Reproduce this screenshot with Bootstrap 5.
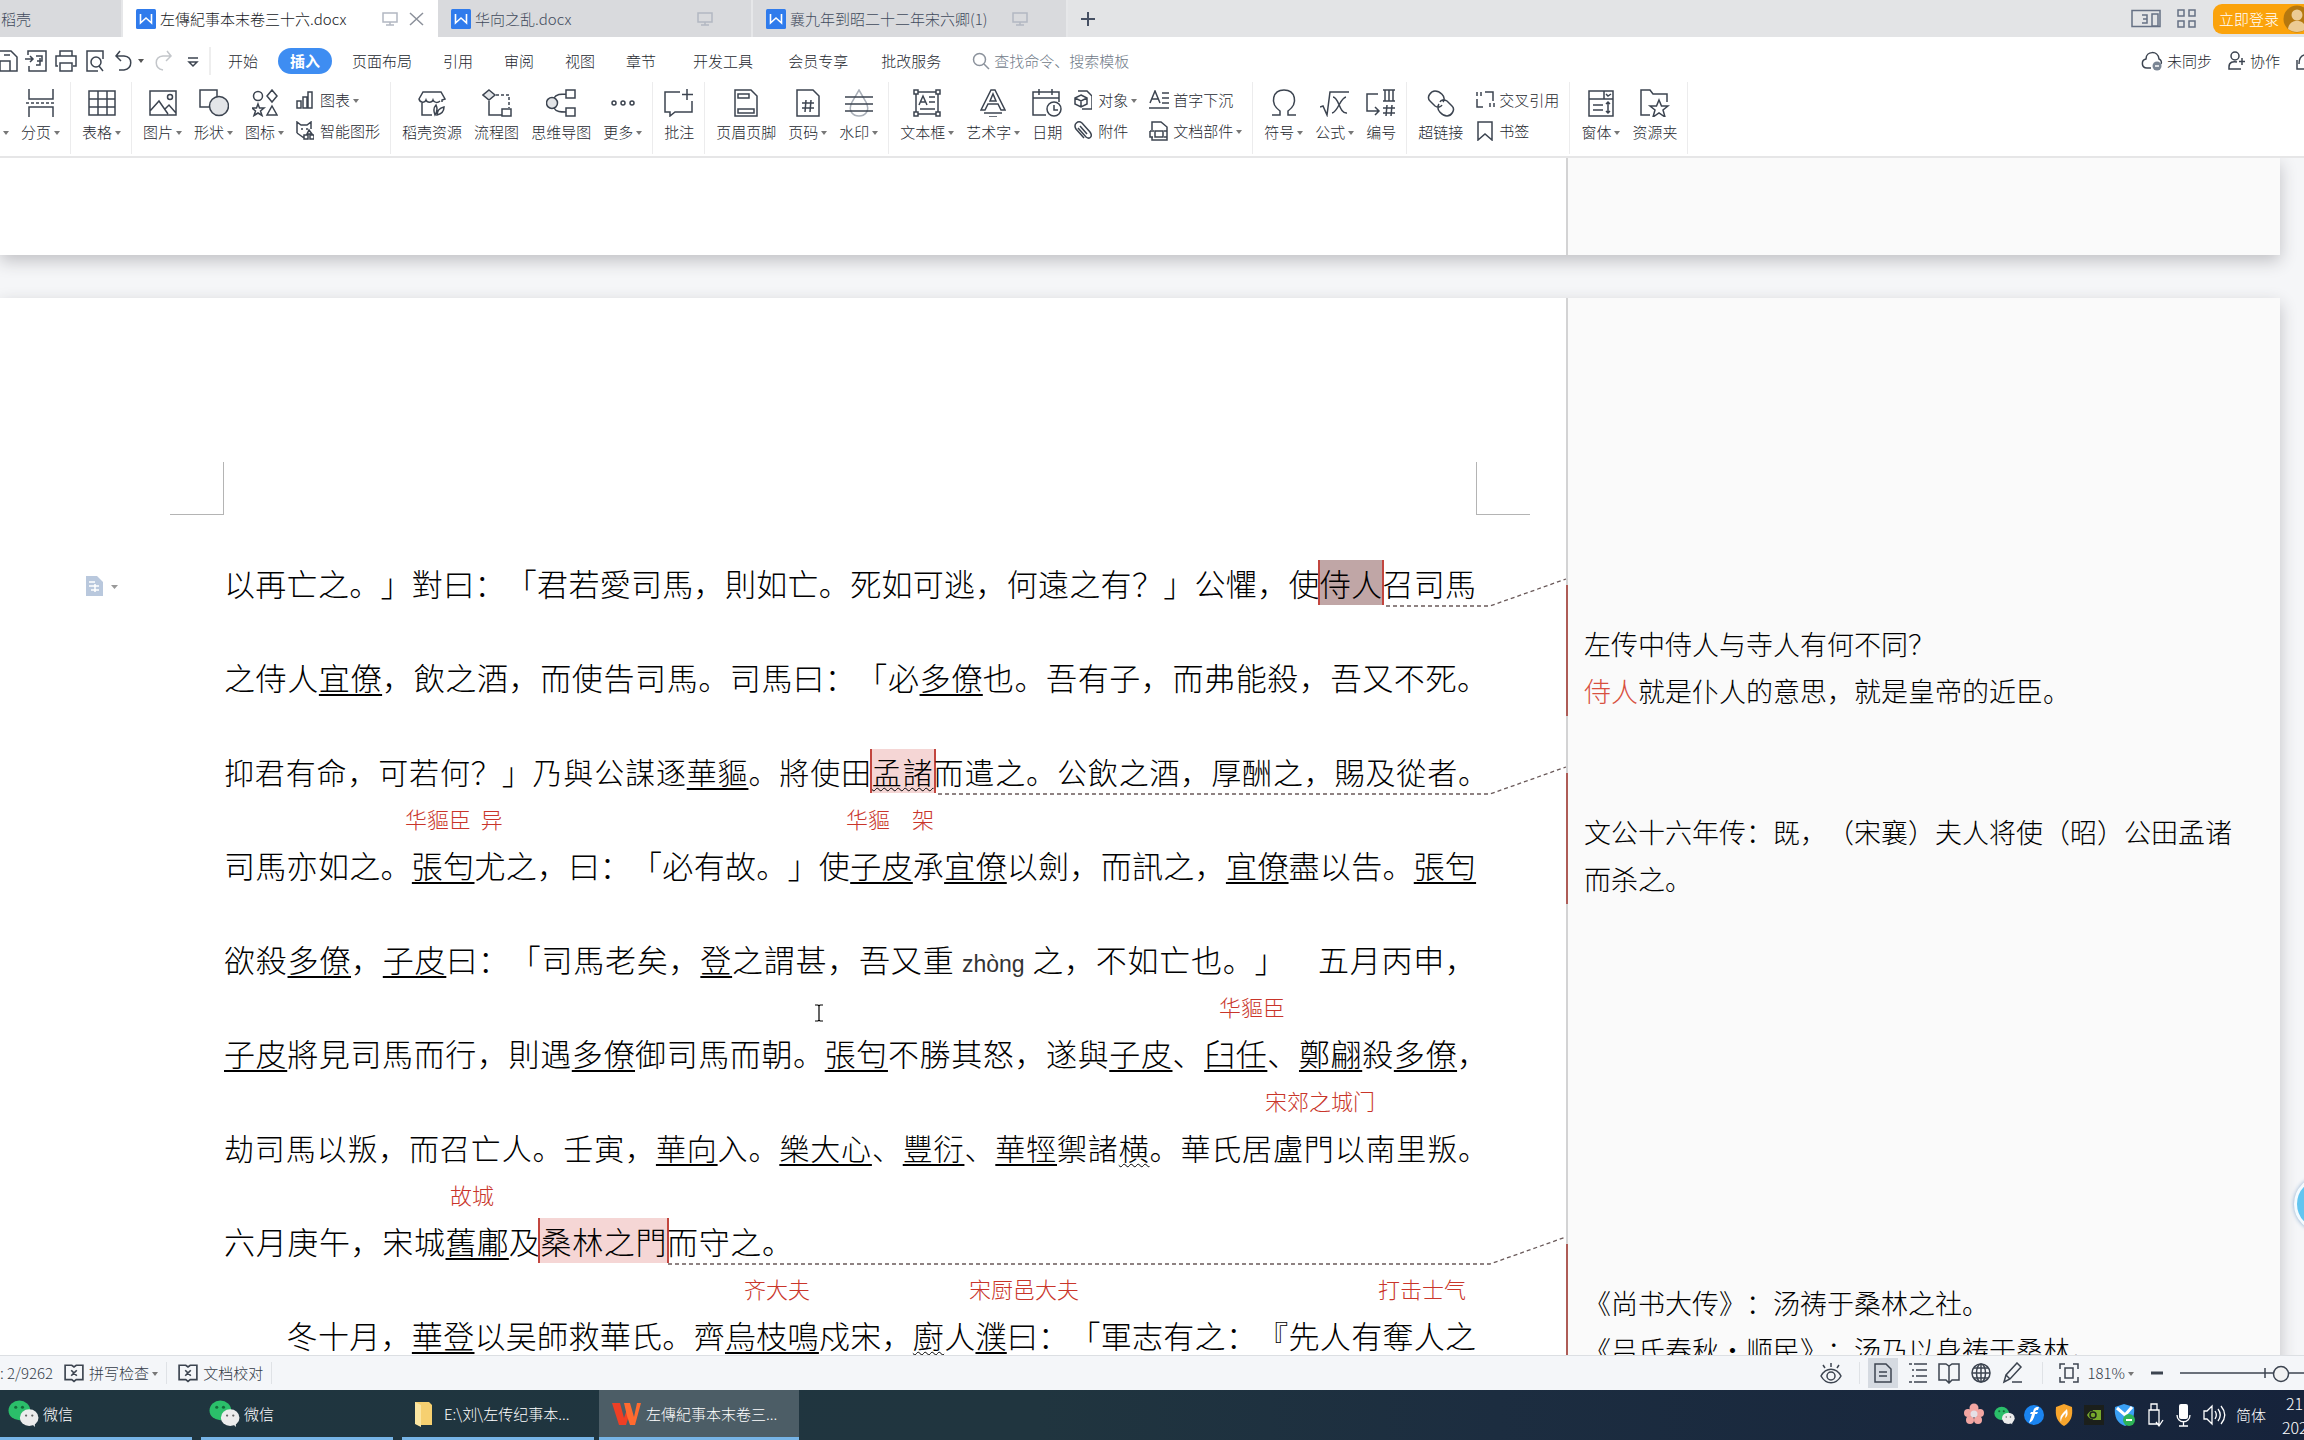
<!DOCTYPE html>
<html lang="zh-CN">
<head>
<meta charset="utf-8">
<meta name="viewport" content="width=device-width, initial-scale=1">
<title>左傳紀事本末卷三十六.docx</title>
<link rel="stylesheet" href="https://cdn.jsdelivr.net/npm/bootstrap@5.3.0/dist/css/bootstrap.min.css">
<style>
html,body{height:100%}
body{font:15px/20px "Noto Sans CJK SC",sans-serif;color:#24282f;background:#fff;font-weight:300}
button,input,a{font:inherit;color:inherit}
button{background:none;border:0;padding:0;white-space:nowrap}
a{text-decoration:none}
svg{display:block;flex:none;fill:none;stroke:#3c4450;stroke-width:1.5}
.tabbar{height:37px;background:#e3e4e6}
.dtab{width:315px;padding-left:13px;color:#414a5c;background:#d9dadd;border-right:2px solid #e6e7e9}
.dtab.first{width:123px;padding-left:1px}
.dtab.on{background:#fff;color:#15181c;border-color:#fff}
.tabend{margin-right:38px}
.plus{margin-left:12px}
.login{height:30px;border-radius:9px 0 0 9px;background:#fba30c;color:#fff;padding-left:6px;width:91px}
.menurow{height:43px;padding-top:4px}
.menurow .qat{width:213px}
.mis{gap:1px}
.mi{padding:3px 15px}
.mi.lg{padding:3px 17px}
.mi.on{background:#3e8df2;color:#fff;border-radius:13px;padding:3px 12px;margin:0 4px;font-weight:700}
.finder{width:220px;border:0;padding:0;outline:0;background:none}
.finder::placeholder{color:#6f7a88;opacity:1}
.ribbon{height:78px;border-bottom:2px solid #e6e6e7;padding:2px 0}
.grp{gap:12px;padding:0 10px 0 11px;border-right:1px solid #ececed}
.big{display:flex;flex-direction:column;align-items:center;gap:5px;padding-top:7px}
.two{gap:11px;padding-top:8px}
.sm{gap:6px}
.near .sm{gap:4px}
.caret::after{content:"";display:inline-block;border:3px solid transparent;border-top:4px solid #777;border-bottom:0;margin-left:3px;vertical-align:3px}
.doc{background:#f5f6f8;overflow:hidden;min-height:0}
.sheetcol{width:2280px;max-width:99%}
.sheet{background:#fff;box-shadow:0 6px 16px #c0c0c4}
.paper{width:1566px}
.notes{background:#fafafa;border-left:2px solid #d3d3d4}
.prev{height:97px}
.next{margin-top:43px;height:1200px}
.corner{height:53px;border-bottom:1px solid #b4b4b4;width:54px}
.corner.l{border-right:1px solid #b4b4b4;margin-left:170px}
.corner.r{border-left:1px solid #b4b4b4;margin-left:1252px}
.crops{margin-top:164px;margin-bottom:21px}
.prose{width:1252px;margin-left:224px;color:#000;font-size:31px;line-height:94px;text-spacing-trim:space-all}
.prose p{margin:0;height:94px;white-space:nowrap;position:relative;text-align-last:justify}
.prose p.hang{margin-right:-12px}
.prose p.tight{font-size:30px}
.prose p.close{width:569px}
.prose u{text-decoration:underline 2px;text-underline-offset:4px;text-decoration-skip-ink:none}
.wv{text-decoration:underline wavy 1px;text-underline-offset:3px;text-decoration-skip-ink:none}
.hl{background:#f5d6d5;border:solid #c2463f;border-width:0 2px;margin:0 -2px;padding:0}
.hl.sel{background:#c0a6a6}
.py{font-family:"Liberation Sans",sans-serif;font-size:23px;color:#333}
.prose .gloss{position:absolute;top:-15px;white-space:pre;font-size:22px;line-height:30px;color:#c9352a;text-align-last:left}
.g1{left:181px}.g2{left:622px}.g3{left:995px}.g4{left:1041px}.g5{left:226px}.g6{left:520px}.g7{left:745px}.g8{left:1154px}
.lead1,.lead2,.lead3{position:absolute;stroke:#6a5a5a;stroke-width:1.3;stroke-dasharray:4 3;overflow:visible;height:28px;top:43px}
.lead1{left:1162px;width:180px}.lead2{left:714px;width:628px}.lead3{left:444px;width:898px}
.remark{position:relative;color:#000;font-size:27px;line-height:47px;padding-left:16px;height:131px;text-spacing-trim:space-all}
.remark::before{content:"";position:absolute;left:-2px;top:0;bottom:0;width:2px;background:#ae5c57}
.remark p{margin:0;padding-top:35px;white-space:nowrap}
.r1{margin-top:287px}.r2{margin-top:57px}.r3{margin-top:340px}
.red{color:#d8503f}
.opts{position:absolute;left:86px;top:278px}
.ibeam{position:absolute;left:814px;top:706px}
.bubble{position:absolute;right:-46px;top:1176px;width:56px;height:56px;border-radius:50%;background:#62c5f0;border:3px solid #f4fbff;box-shadow:0 0 4px #8ac}
.status{height:35px;background:#f4f6f9;border-top:1px solid #dcdfe3;color:#333b47}
.prf{gap:5px;margin-left:11px}
.vr1{width:1px;height:22px;background:#dfe2e6}
.cur{background:#d5dae1;padding:4px 5px}
.views{gap:10px}
.task{height:50px;background:linear-gradient(90deg,#1f353f 0,#20353f 45%,#1c2d40 65%,#16233b 100%);color:#fff}
.ti{width:192px;height:50px;border-bottom:3px solid #76b4e6;gap:4px;padding-left:8px;margin-right:9px}
.ti.on{width:200px;background:#4c5d66;margin:0;padding-left:12px}
.ti.f{margin-right:5px;gap:10px;padding-left:12px}
.task svg{stroke:none}
.rng{width:124px;height:20px}
.clock{width:22px;overflow:hidden;line-height:24px;font-size:16px;white-space:nowrap}
</style>
</head>
<body class="d-flex flex-column overflow-hidden position-relative">
<svg width="0" height="0" class="position-absolute"><defs>
<symbol id="w" viewBox="0 0 20 20"><rect width="20" height="20" rx="1.5" fill="#2f7bec" stroke="none"/><path d="M4.500 5v9l5.500-5 5.500 5V5" stroke="#fff" stroke-width="1.600"/></symbol>
<symbol id="scr" viewBox="0 0 16 16"><path d="M1 2h14v9H1zM8 11v3M4 14h8" stroke="#b3b8c2"/></symbol>
<symbol id="wx" viewBox="0 0 30 26"><ellipse cx="11" cy="10" rx="10.500" ry="9.500" fill="#2bbf6a"/><circle cx="7.500" cy="7" r="1.500" fill="#146b3a"/><circle cx="14" cy="7" r="1.500" fill="#146b3a"/><ellipse cx="20.500" cy="17" rx="9" ry="8" fill="#ececec"/><path d="M23 23l3 3v-4z" fill="#ececec"/><circle cx="17.500" cy="15" r="1.100" fill="#666"/><circle cx="23.500" cy="15" r="1.100" fill="#666"/></symbol>
<symbol id="chk" viewBox="0 0 18 18"><path d="M1 2h6l2 1.500L11 2h6v13h-6l-2 1.500L7 15H1zM6.500 6.500l5 5M11.500 6.500l-5 5"/></symbol>
</defs></svg>

<header>
<nav class="tabbar d-flex" aria-label="文档标签">
 <a href="#" class="dtab first d-flex align-items-center">稻壳</a>
 <a href="#" class="dtab on d-flex align-items-center gap-1"><svg width="20" height="20"><use href="#w"/></svg><span>左傳紀事本末卷三十六.docx</span><svg class="ms-auto" width="16" height="16"><use href="#scr"/></svg><svg width="34" height="16" viewBox="0 0 34 16"><path d="M8 2l13 12M21 2L8 14" stroke="#8b909a"/></svg></a>
 <a href="#" class="dtab d-flex align-items-center gap-1"><svg width="20" height="20"><use href="#w"/></svg><span>华向之乱.docx</span><svg class="ms-auto tabend" width="16" height="16"><use href="#scr"/></svg></a>
 <a href="#" class="dtab d-flex align-items-center gap-1"><svg width="20" height="20"><use href="#w"/></svg><span>襄九年到昭二十二年宋六卿(1)</span><svg class="ms-auto tabend" width="16" height="16"><use href="#scr"/></svg></a>
 <button class="plus" aria-label="新建"><svg width="16" height="16" viewBox="0 0 16 16"><path d="M8 1v14M1 8h14" stroke="#465063" stroke-width="2"/></svg></button>
 <div class="ms-auto d-flex align-items-center gap-3">
  <svg width="30" height="20" viewBox="0 0 30 20"><path d="M1 1.500h28v16H1zM21 5h6v12h-6zM11 6h5v4h-4 4v4h-5" stroke="#667084"/></svg>
  <svg width="20" height="20" viewBox="0 0 20 20"><path d="M1 1h6v6H1zM12 1h6v6h-6zM1 12h6v6H1zM12 12h6v6h-6z" stroke="#667084"/></svg>
  <button class="login d-flex align-items-center gap-1 overflow-hidden">立即登录<svg width="28" height="28" viewBox="0 0 28 28"><circle cx="14" cy="14" r="13.500" fill="#b5780f" stroke="none"/><circle cx="14" cy="10" r="5.500" fill="#eccb94" stroke="none"/><path d="M5 24c1-11 17-11 18 0-5 4-13 4-18 0z" fill="#eccb94" stroke="none"/></svg></button>
 </div>
</nav>
<div class="menurow d-flex align-items-center">
 <div class="qat d-flex align-items-center">
  <svg width="211" height="28" viewBox="0 0 211 28"><path d="M-4 4H11l6 6v14H-4zM0 24v-10h10v10M4 8h6"/><path d="M28 8V4h18v20H29v-5M25 12h8m-3-3l3 3-3 3M36 18h4v-7M36 9h6v5h-5"/><path d="M60 9V4h12v5M58 19h-2V9h20v10h-3M60 16h12v8H60z"/><path d="M98 24H87V4h16v8"/><circle cx="96" cy="15" r="5"/><path d="M99 19l4 5M120 4l-4 5 5 5M117 9h7c9 1 9 12 0 14h-5"/><path d="M138 12l3 4 3-4z" fill="#555" stroke="none"/><path d="M167 4l4 5-5 5M170 9h-7c-9 1-9 12 0 14" stroke="#c3c6ca"/><path d="M188 11h10M189 15h8l-4 4z"/><path d="M210 0v28" stroke="#e8e8e8"/></svg>
 </div>
 <nav class="mis d-flex align-items-center" aria-label="功能区">
 <button class="mi">开始</button><button class="mi on">插入</button><button class="mi">页面布局</button><button class="mi">引用</button><button class="mi">审阅</button><button class="mi">视图</button><button class="mi">章节</button><button class="mi lg ms-1">开发工具</button><button class="mi lg">会员专享</button><button class="mi">批改服务</button></nav>
 <label class="d-flex align-items-center gap-1 ms-3"><svg width="18" height="18" viewBox="0 0 18 18"><circle cx="7.500" cy="7.500" r="6" stroke="#8b929c"/><path d="M12 12l5 5" stroke="#8b929c"/></svg><input class="finder" type="text" placeholder="查找命令、搜索模板" aria-label="查找命令"></label>
 <div class="ms-auto d-flex align-items-center gap-3">
  <button class="d-flex align-items-center gap-1"><svg width="22" height="20" viewBox="0 0 22 20"><path d="M10 17H6C0 17 0 9 5 8c0-8 12-9 13 0 2 1 3 3 2 5"/><circle cx="16" cy="15" r="4.500" fill="#7a8594" stroke="none"/><path d="M14 15h4" stroke="#fff"/></svg>未同步</button>
  <button class="d-flex align-items-center gap-1"><svg width="18" height="20" viewBox="0 0 18 20"><circle cx="7" cy="5" r="4"/><path d="M13 18H1v-2c0-5 4-6 8-5M14 7v7M11 10.500h6"/></svg>协作</button>
  <svg width="8" height="20" viewBox="0 0 8 20"><path d="M1 9v9h14M8 4c-4 1-5 5-5 9"/></svg>
 </div>
</div>
<div class="ribbon d-flex">
 <div class="grp d-flex ps-0"><button class="big" aria-label="封面"><svg width="4" height="28"></svg><span class="caret"></span></button>
  <button class="big"><svg width="30" height="28" viewBox="0 0 30 28"><path d="M3 0v10h24V0M3 28V18h24v10"/><path d="M0 14h30" stroke-dasharray="3 2"/></svg><span class="caret">分页</span></button></div>
 <div class="grp d-flex"><button class="big"><svg width="28" height="28" viewBox="0 0 28 28"><path d="M1 2h26v24H1zM1 10h26M1 18h26M10 2v24M19 2v24"/></svg><span class="caret">表格</span></button></div>
 <div class="grp d-flex">
  <button class="big"><svg width="28" height="28" viewBox="0 0 28 28"><path d="M1 2h26v24H1zM1 22l9-10 9 13M16 20l4-4 7 8"/><circle cx="21" cy="8" r="2.500"/></svg><span class="caret">图片</span></button>
  <button class="big"><svg width="30" height="28" viewBox="0 0 30 28"><path d="M10 18H1V1h17v7"/><circle cx="20" cy="17" r="9.500" fill="#e3e5e8"/></svg><span class="caret">形状</span></button>
  <button class="big"><svg width="26" height="28" viewBox="0 0 26 28"><circle cx="6" cy="7" r="4.500"/><path d="M20 1l5 6-5 6-5-6zM20 17l5 9H15zM6 15l1.500 4H12l-3.500 3 1.500 4.500-4-2.500-4 2.500L3.500 22 0 19h4.500z"/></svg><span class="caret">图标</span></button>
  <div class="two d-flex flex-column">
   <button class="sm d-flex align-items-center"><svg width="18" height="18" viewBox="0 0 18 18"><path d="M1 10h4v7H1zM7 6h4v11H7zM12 1h4v16h-4z"/></svg><span class="caret">图表</span></button>
   <button class="sm d-flex align-items-center"><svg width="18" height="20" viewBox="0 0 18 20"><path d="M1 12V1l4 3h6l4-3v7M1 12l7 5M5 8h2M10 8h2M13 9l3 4h-5zM8 18v-4h4v4zM14 14h4v4h-4z"/></svg><span>智能图形</span></button></div></div>
 <div class="grp d-flex">
  <button class="big"><svg width="28" height="28" viewBox="0 0 28 28"><path d="M14 26H4V13M24 13v-2l3-1-4-7H5L1 10c1 4 6 4 7 1 1 3 6 3 7 0 1 3 5 3 7 1M17 26c-2-5-1-8 1-10 2 4 1 7-1 10zm2 0c0-4 3-7 7-8 0 4-3 7-7 8z"/></svg>稻壳资源</button>
  <button class="big"><svg width="30" height="28" viewBox="0 0 30 28"><path d="M7 1l6 5-6 5-6-5z" fill="#e3e5e8"/><path d="M14 6h13v13" stroke-dasharray="3 2"/><path d="M7 12v14h13M20 20h9v7h-9z"/></svg>流程图</button>
  <button class="big"><svg width="30" height="28" viewBox="0 0 30 28"><circle cx="6" cy="14" r="5.500" fill="#e3e5e8"/><path d="M20 1h9v8h-9zM20 19h9v8h-9zM8 9c2-4 7-4 12-4M8 19c2 4 7 4 12 4"/></svg>思维导图</button>
  <button class="big"><svg width="24" height="28" viewBox="0 0 24 28"><circle cx="3" cy="14" r="2"/><circle cx="12" cy="14" r="2"/><circle cx="21" cy="14" r="2"/></svg><span class="caret">更多</span></button></div>
 <div class="grp d-flex"><button class="big"><svg width="30" height="28" viewBox="0 0 30 28"><path d="M16 3H1v20h5v4l5-4h17V12M23 0v11M18 5.500h11"/></svg>批注</button></div>
 <div class="grp d-flex">
  <button class="big"><svg width="24" height="28" viewBox="0 0 24 28"><path d="M1 1h16l6 6v20H1zM4 5h11v4H4zM4 20h16v4H4z"/></svg>页眉页脚</button>
  <button class="big"><svg width="24" height="28" viewBox="0 0 24 28"><path d="M1 1h16l6 6v20H1zM6 14h12M6 19h12M10 11l-1 12M15 11l-1 12"/></svg><span class="caret">页码</span></button>
  <button class="big"><svg width="28" height="28" viewBox="0 0 28 28"><path d="M14 1l7 12c5 10-2 14-7 14S2 23 7 13z" stroke="#a9afb8"/><path d="M0 8h28M0 15h28M0 22h28"/></svg><span class="caret">水印</span></button></div>
 <div class="grp d-flex">
  <button class="big"><svg width="28" height="28" viewBox="0 0 28 28"><path d="M3 3h22v22H3zM6 16l4-9 4 9M8 13h4M16 8h6M16 13h6M7 20h15"/><path d="M1 1h4v4H1zM23 1h4v4h-4zM1 23h4v4H1zM23 23h4v4h-4z" fill="#fff"/></svg><span class="caret">文本框</span></button>
  <button class="big"><svg width="26" height="28" viewBox="0 0 26 28"><path d="M1 21L11 1h4l10 20h-4l-3-6H8l-3 6zM10 12h6l-3-7zM4 24h18M9 28h8"/></svg><span class="caret">艺术字</span></button>
  <button class="big"><svg width="30" height="28" viewBox="0 0 30 28"><path d="M14 26H1V3h26v10M1 9h26M7 0v6M20 0v6"/><circle cx="22" cy="20" r="7"/><path d="M22 16v5h4"/></svg>日期</button>
  <div class="two d-flex flex-column">
   <button class="sm d-flex align-items-center"><svg width="18" height="20" viewBox="0 0 18 20"><path d="M4 1h9l5 5v13H8M7 5l6 3v6l-6 3-6-3V8zM1 8l6 3 6-3M7 11v6"/></svg><span class="caret">对象</span></button>
   <button class="sm d-flex align-items-center"><svg width="18" height="20" viewBox="0 0 18 20"><path d="M4 7l8 9c4 3 7-1 4-5L8 2C4-1-1 3 2 8l8 9M6 5l7 8"/></svg><span>附件</span></button></div>
  <div class="two near d-flex flex-column">
   <button class="sm d-flex align-items-center"><svg width="20" height="20" viewBox="0 0 20 20"><path d="M1 13L6 1l5 12M3 9h6M13 3h7M13 8h7M13 13h7M0 18h20"/></svg><span>首字下沉</span></button>
   <button class="sm d-flex align-items-center"><svg width="20" height="20" viewBox="0 0 20 20"><path d="M3 9V1h9l6 5v13H3v-3M1 10h4M15 10h3M6 10h8v6H6zM1 10v6h3M18 10v6h-3"/></svg><span class="caret">文档部件</span></button></div></div>
 <div class="grp d-flex">
  <button class="big"><svg width="26" height="28" viewBox="0 0 26 28"><path d="M1 26h8v-4C-2 14 2 1 13 1s15 13 4 21v4h8"/></svg><span class="caret">符号</span></button>
  <button class="big"><svg width="30" height="28" viewBox="0 0 30 28"><path d="M0 18l3-1 4 9L10 3h19M13 8c6 0 6 17 14 16M26 8C20 9 18 23 12 24"/></svg><span class="caret">公式</span></button>
  <button class="big"><svg width="30" height="28" viewBox="0 0 30 28"><path d="M12 5H1v17h12M9 18l4 4-4 4M17 1h12M17 12h12M19 1v11M23 1v11M27 1v11M17 19h12M17 24h12M21 16l-1 11M26 16l-1 11"/></svg>编号</button></div>
 <div class="grp d-flex">
  <button class="big"><svg width="28" height="28" viewBox="0 0 28 28"><path d="M16 13c4-6-4-11-8-11S-1 8 3 12l5 5c3 2 6 1 7-1M12 15c-4 6 4 12 8 12s9-6 5-10l-5-5c-3-2-6-1-7 1"/></svg>超链接</button>
  <div class="two near d-flex flex-column">
   <button class="sm d-flex align-items-center"><svg width="20" height="20" viewBox="0 0 20 20"><path d="M2 6V2M6 6V2M2 9v8h6M10 2h8v9M15 13v4M19 13v4"/></svg><span>交叉引用</span></button>
   <button class="sm d-flex align-items-center"><svg width="20" height="20" viewBox="0 0 20 20"><path d="M3 1h14v18l-7-6-7 6z"/></svg><span>书签</span></button></div></div>
 <div class="grp d-flex">
  <button class="big"><svg width="26" height="28" viewBox="0 0 26 28"><path d="M1 2h24v25H1zM1 10h24M16 2v8M18 5l2 2 3-2M5 16h10M5 21h10M20 13v11M18 15l2-2 2 2M18 22l2 2 2-2"/></svg><span class="caret">窗体</span></button>
  <button class="big"><svg width="30" height="28" viewBox="0 0 30 28"><path d="M10 26H1V1h9l3 4h14v8M19 11l2.500 6H28l-5 4 2 7-6-4-6 4 2-7-5-4h6.500z"/></svg>资源夹</button></div>
</div>
</header>

<main class="doc flex-grow-1">
<div class="sheetcol">
 <section class="sheet prev d-flex"><div class="paper"></div><div class="notes flex-grow-1"></div></section>
 <section class="sheet next d-flex">
  <article class="paper position-relative">
   <div class="crops d-flex"><div class="corner l"></div><div class="corner r"></div></div>
   <div class="prose position-relative">
    <p>以再亡之。」對曰：「君若愛司馬，則如亡。死如可逃，何遠之有？」公懼，使<span class="hl sel">侍人</span>召司馬<svg class="lead1" viewBox="0 0 180 28"><path d="M0 27h104l76-27"/></svg></p>
    <p class="hang">之侍人<u>宜僚</u>，飲之酒，而使告司馬。司馬曰：「必<u>多僚</u>也。吾有子，而弗能殺，吾又不死。</p>
    <p class="hang tight">抑君有命，可若何？」乃與公謀逐<u>華貙</u>。將使田<span class="hl wv">孟諸</span>而遣之。公飲之酒，厚酬之，賜及從者。<svg class="lead2" viewBox="0 0 628 28"><path d="M0 27h552l76-27"/></svg></p>
    <p><span class="gloss g1">华貙臣  异</span><span class="gloss g2">华貙　架</span>司馬亦如之。<u>張匄</u>尤之，曰：「必有故。」使<u>子皮</u>承<u>宜僚</u>以劍，而訊之，<u>宜僚</u>盡以告。<u>張匄</u></p>
    <p>欲殺<u>多僚</u>，<u>子皮</u>曰：「司馬老矣，<u>登</u>之謂甚，吾又重 <span class="py">zhòng</span> 之，不如亡也。」　五月丙申，</p>
    <p class="hang"><span class="gloss g3">华貙臣</span><u>子皮</u>將見司馬而行，則遇<u>多僚</u>御司馬而朝。<u>張匄</u>不勝其怒，遂與<u>子皮</u>、<u>臼任</u>、<u>鄭翩</u>殺<u>多僚</u>，</p>
    <p class="hang tight"><span class="gloss g4">宋郊之城门</span>劫司馬以叛，而召亡人。壬寅，<u>華向</u>入。<u>樂大心</u>、<u>豐衍</u>、<u>華牼</u>禦諸<span class="wv">横</span>。華氏居盧門以南里叛。</p>
    <p class="close"><span class="gloss g5">故城</span>六月庚午，宋城<u>舊鄘</u>及<span class="hl">桑林之門</span>而守之。<svg class="lead3" viewBox="0 0 898 28"><path d="M0 27h822l76-27"/></svg></p>
    <p><span class="gloss g6">齐大夫</span><span class="gloss g7">宋厨邑大夫</span><span class="gloss g8">打击士气</span>　　冬十月，<u>華登</u>以吴師救華氏。齊<u>烏枝鳴</u>戍宋，<span class="wv">廚</span>人<u>濮</u>曰：「軍志有之：『先人有奪人之</p>
   </div>
   <svg class="opts" width="36" height="20" viewBox="0 0 36 20"><path d="M0 0h11l6 6v14H0z" fill="#b9c8dd" stroke="none"/><path d="M3 6h6M3 10h10M9 8v8M5 14h8" stroke="#fff"/><path d="M25 9h7l-3.500 4z" fill="#999" stroke="none"/></svg>
   <svg class="ibeam" width="10" height="18" viewBox="0 0 10 18"><path d="M1 1h3l1 1 1-1h3M5 2v14M1 17h3l1-1 1 1h3" stroke="#000" stroke-width="1.200"/></svg>
  </article>
  <aside class="notes flex-grow-1 d-flex flex-column">
   <div class="remark r1"><p>左传中侍人与寺人有何不同？<br><span class="red">侍人</span>就是仆人的意思，就是皇帝的近臣。</p></div>
   <div class="remark r2"><p>文公十六年传：既，（宋襄）夫人将使（昭）公田孟诸<br>而杀之。</p></div>
   <div class="remark r3"><p>《尚书大传》：汤祷于桑林之社。<br>《吕氏春秋·顺民》：汤乃以身祷于桑林，</p></div>
  </aside>
 </section>
</div>
</main>
<button class="bubble" aria-label="助手"></button>

<footer>
<div class="status d-flex align-items-center">
 <span>: 2/9262</span>
 <button class="prf d-flex align-items-center"><svg width="20" height="20"><use href="#chk"/></svg><span class="caret">拼写检查</span></button>
 <span class="vr1 ms-2"></span>
 <button class="prf d-flex align-items-center"><svg width="20" height="20"><use href="#chk"/></svg>文档校对</button>
 <span class="vr1 ms-2"></span>
 <div class="ms-auto d-flex align-items-center">
  <svg width="24" height="22" viewBox="0 0 24 22"><path d="M2 14c5-9 15-9 20 0-5 9-15 9-20 0zM12 1v4M4 3l2 3M20 3l-2 3"/><circle cx="12" cy="14" r="4"/></svg>
  <span class="vr1 mx-2 mx-2 me-2 ms-3"></span>
  <div class="views d-flex align-items-center">
  <button class="cur" aria-label="页面"><svg width="20" height="22" viewBox="0 0 20 22"><path d="M2 2h11l5 5v13H2zM6 10h8M6 14h8"/></svg></button>
  <svg width="20" height="22" viewBox="0 0 20 22"><path d="M1 2h3M6 2h13M4 8h2M8 8h11M4 14h2M8 14h11M1 20h3M6 20h13"/></svg>
  <svg width="22" height="22" viewBox="0 0 22 22"><path d="M1 2h7l3 2 3-2h7v16h-7l-3 3-3-3H1zM11 4v17"/></svg>
  <svg width="22" height="22" viewBox="0 0 22 22"><circle cx="11" cy="11" r="9"/><path d="M2 11h18M11 2v18M4 6h14M4 16h14"/><ellipse cx="11" cy="11" rx="4.500" ry="9"/></svg>
  <svg width="24" height="22" viewBox="0 0 24 22"><path d="M2 20l2-7L15 1l4 4L8 17zM4 13l4 4M10 20h10"/></svg>
  </div>
  <span class="vr1 ms-3 me-3"></span>
  <svg width="20" height="20" viewBox="0 0 20 20"><path d="M1 6V1h5M14 1h5v5M1 14v5h5M14 19h5v-5M6 5h8v10H6z"/></svg>
  <span class="caret ms-2">181%</span>
  <svg class="ms-3" width="14" height="14" viewBox="0 0 14 14"><path d="M1 7h12" stroke-width="3"/></svg>
  <svg class="rng ms-3" viewBox="0 0 124 20"><path d="M0 10h124M85 5v10"/><circle cx="101" cy="11" r="7.500" fill="#f2f2f2"/></svg>
 </div>
</div>
<div class="task d-flex align-items-center">
 <button class="ti d-flex align-items-center"><svg width="31" height="27"><use href="#wx"/></svg>微信</button>
 <button class="ti d-flex align-items-center"><svg width="31" height="27"><use href="#wx"/></svg>微信</button>
 <button class="ti f d-flex align-items-center"><svg width="20" height="26" viewBox="0 0 20 26"><path d="M1 1h14l3 3v20H4z" fill="#f6d070"/><path d="M1 1l6 3v22l-6-3z" fill="#fbe6a2"/></svg>E:\刘\左传纪事本...</button>
 <button class="ti on d-flex align-items-center"><svg width="31" height="24" viewBox="0 0 31 24"><path d="M1 1h8l4 15 3-9h4l-5 16H8z" fill="#ee3f25"/><path d="M13 1h6l4 14 3-14h4l-6 22h-5l-3-9z" fill="#ff6a2f"/></svg>左傳紀事本末卷三...</button>
 <div class="ms-auto d-flex align-items-center">
  <svg width="272" height="26" viewBox="0 0 272 26"><g fill="#f3a6a2"><circle cx="10" cy="6" r="4.500"/><circle cx="4" cy="11" r="4"/><circle cx="16" cy="11" r="4"/><circle cx="6" cy="18" r="4"/><circle cx="14" cy="18" r="4"/></g><circle cx="10" cy="12" r="3.500" fill="#e5e0e6"/>
  <use href="#wx" x="30" y="4" width="21" height="19"/>
  <circle cx="70" cy="13" r="10" fill="#1a84f0"/><path d="M65 21l3-9h-2l1-2h2c1-5 3-5 6-5l-1 3c-2 0-2 0-3 2h3l-1 2h-2c-1 4-2 7-6 9z" fill="#fff"/>
  <path d="M92 5l8-3 8 3c1 9-1 15-8 19-7-4-9-10-8-19z" fill="#f8a52c"/><path d="M97 20c-2-6 1-8 6-13 1 5 1 7-2 9l1-5c-3 3-5 5-5 9z" fill="#fff"/>
  <path d="M120 3h20v20h-20z" fill="#1b1f1b"/><path d="M129 8h8v10h-8zM123 13c2-4 5-5 8-4v8c-3 1-6 0-8-4z" fill="#76a82c"/><circle cx="129" cy="13" r="3" fill="none" stroke="#1b1f1b" stroke-width="1.500"/>
  <path d="M151 5l9-3 10 3c1 10-2 16-9 19-8-3-11-9-10-19z" fill="#3aa0f4"/><path d="M153 6l8 7 7-8" fill="none" stroke="#fff" stroke-width="3"/><circle cx="165" cy="18" r="6" fill="#2fb457"/><path d="M162 18h6" stroke="#fff" stroke-width="2"/>
  <path d="M187 2h6v6h-6zM185 8h10v14h-10zM192 20l3 4 4-6" fill="none" stroke="#fff" stroke-width="1.300"/>
  <rect x="215" y="2" width="9" height="15" rx="2" fill="#fff"/><path d="M213 13c0 9 13 9 13 0M219.500 19v5M215 24h9" fill="none" stroke="#fff" stroke-width="1.300"/>
  <path d="M240 9h3l5-5v18l-5-5h-3zM251 9c2 3 2 5 0 8M254 7c3 4 3 8 0 12M257 4c5 6 5 12 0 18" fill="none" stroke="#fff" stroke-width="1.300"/></svg>
  <span class="me-3">简体</span>
  <div class="clock"><div class="ps-1">21</div><div>202</div></div>
 </div>
</div>
</footer>
<script src="https://cdn.jsdelivr.net/npm/bootstrap@5.3.0/dist/js/bootstrap.bundle.min.js"></script>
</body>
</html>
